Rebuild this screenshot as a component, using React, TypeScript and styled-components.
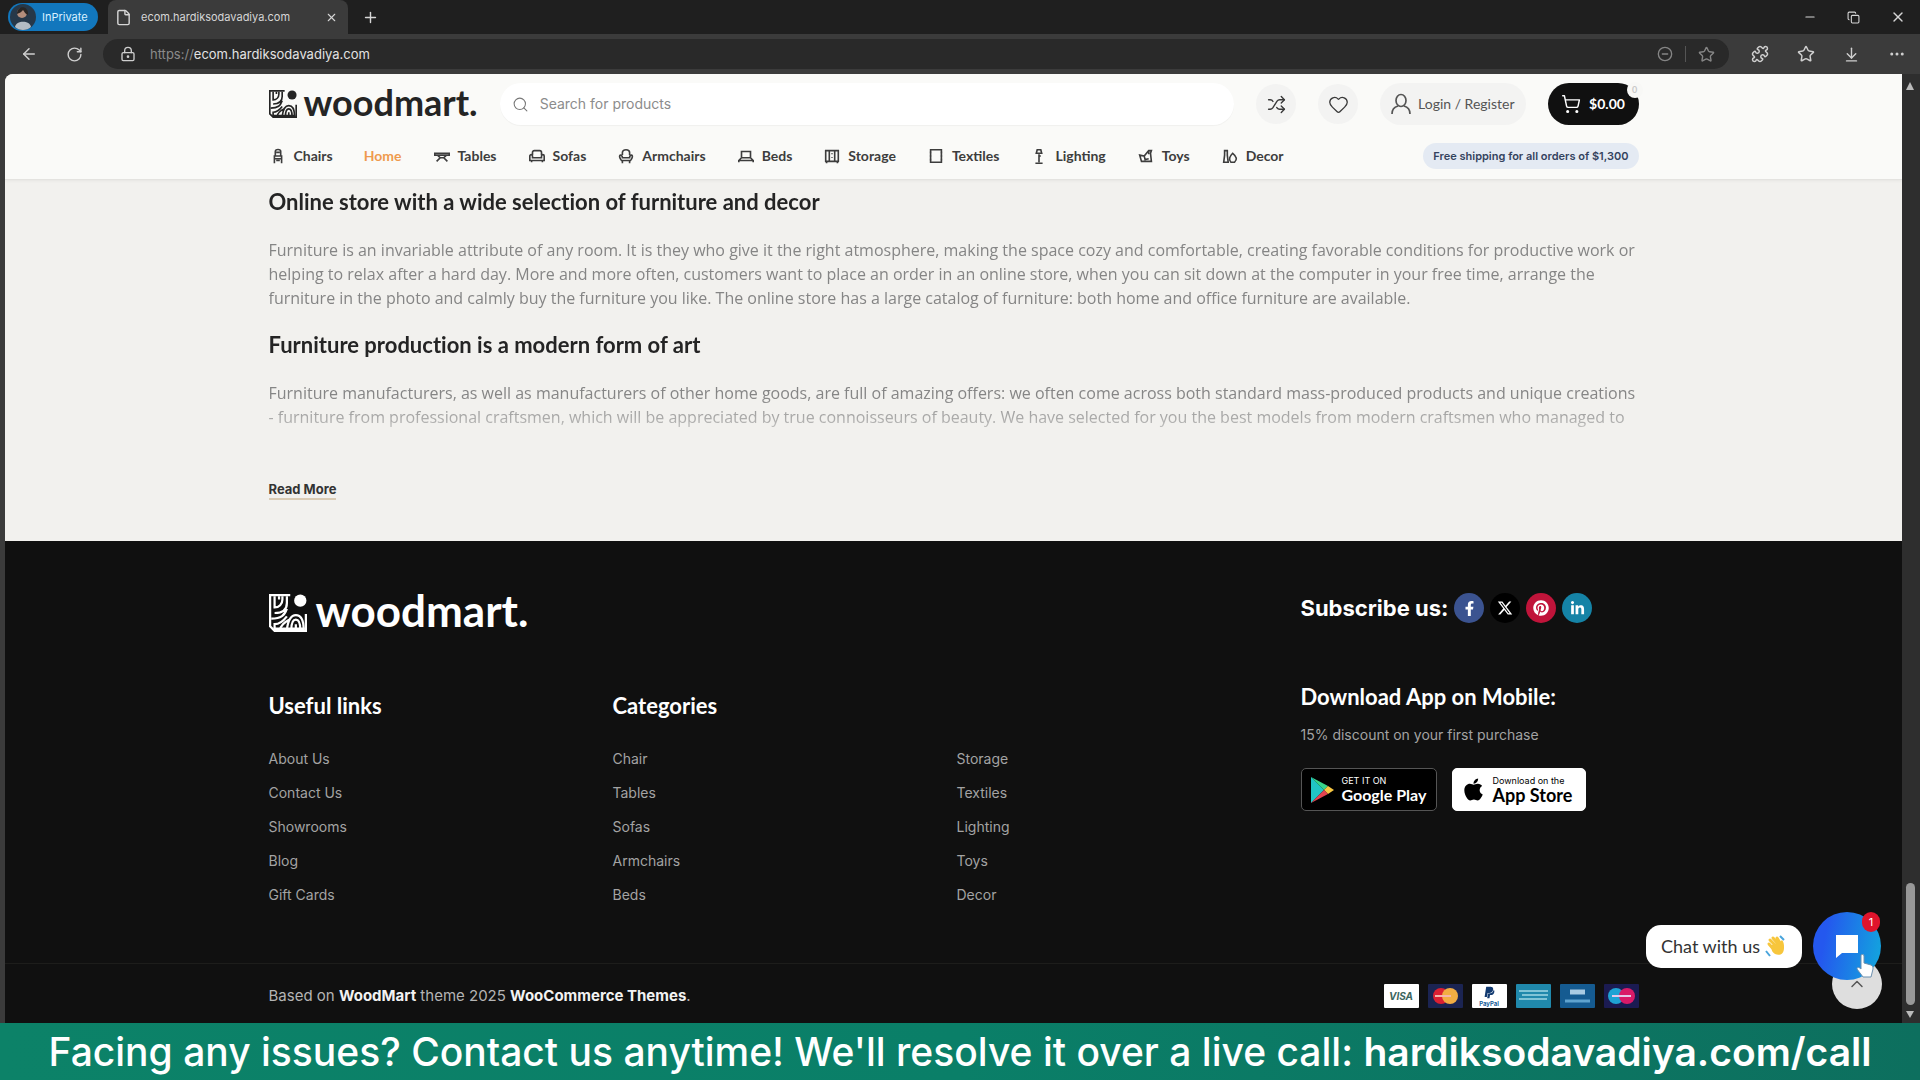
import React from "react";
import styled, { createGlobalStyle } from "styled-components";
import {
  ArrowLeft, RotateCw, File, X, Plus, Minus, Copy, LockKeyhole, CircleMinus, Star, Puzzle, ArrowDownToLine,
  Ellipsis, Search, Shuffle, Heart, ShoppingCart, ChevronUp,
} from "lucide-react";
import { FaFacebookF, FaPinterest, FaLinkedinIn, FaApple, FaPaypal } from "react-icons/fa";
import { FaXTwitter } from "react-icons/fa6";

const body = `Inter, "Liberation Sans", sans-serif`;
const reading = `"Open Sans", "Liberation Sans", sans-serif`;
const display = `Lato, "Liberation Sans", sans-serif`;

const GlobalStyle = createGlobalStyle`
  * { box-sizing: border-box; }
  body { margin: 0; background: #101010; font-family: ${body}; }
  h2, h3, p, ul { margin: 0; padding: 0; }
  ul { list-style: none; }
  a { color: inherit; text-decoration: none; }
  button { border: 0; padding: 0; background: none; color: inherit; font: inherit; cursor: pointer; }
  svg { display: block; flex: none; }
`;

const Screen = styled.div`
  display: flex;
  flex-direction: column;
  height: 100vh;
  overflow: hidden;
`;

/* Browser chrome */
const TabStrip = styled.div`
  display: flex;
  align-items: center;
  flex: none;
  height: 34px;
  padding: 0 14px 0 8px;
  background: #1f1f1f;
  color: #d6d6d6;
`;
const Profile = styled.button`
  display: flex;
  align-items: center;
  gap: 6px;
  width: 90px;
  height: 28px;
  padding: 0 2px;
  border-radius: 14px;
  background: #1277bd;
  color: #d9f0ff;
  font-size: 11px;
`;
const Tab = styled.div`
  display: flex;
  align-items: center;
  gap: 9px;
  align-self: stretch;
  width: 240px;
  margin: 0 14px 0 10px;
  padding: 0 10px 0 7px;
  border-radius: 8px 8px 0 0;
  background: #3b3b3b;
  font-size: 11px;
`;
const TabTitle = styled.span`
  flex: 1;
  white-space: nowrap;
`;
const WindowControls = styled.div`
  display: flex;
  gap: 30px;
  margin-left: auto;
`;
const Toolbar = styled.div`
  display: flex;
  align-items: center;
  flex: none;
  gap: 28px;
  height: 40px;
  padding: 0 14px 0 20px;
  background: #3b3b3b;
  color: #cfcfcf;
`;
const AddressBar = styled.div`
  display: flex;
  align-items: center;
  flex: 1;
  gap: 14px;
  height: 30px;
  margin: 0 -6px 0 -8px;
  padding: 0 14px 0 17px;
  border-radius: 15px;
  background: #292929;
`;
const Url = styled.span`
  flex: 1;
  color: #e2e2e2;
  font-size: 13px;
`;
const Scheme = styled.span`
  color: #8b8b8b;
`;
const Dim = styled.span`
  display: flex;
  gap: 12px;
  color: #858585;
`;
const Bar = styled.span`
  width: 1px;
  height: 16px;
  background: #555;
`;

/* Page viewport */
const Frame = styled.div`
  display: flex;
  flex: 1;
  min-height: 0;
  padding-left: 5px;
  background: #3b3b3b;
`;
const Page = styled.main`
  display: flex;
  flex-direction: column;
  flex: 1;
  overflow: hidden;
  border-radius: 8px 0 0 0;
  background: #f2f1ee;
`;
const Scrollbar = styled.div`
  display: flex;
  flex-direction: column;
  align-items: center;
  justify-content: space-between;
  width: 18px;
  padding: 7px 2px 4px 0;
  background: #2e2e2e;
`;
const Thumb = styled.div`
  width: 9px;
  height: 122px;
  margin: auto 0 5px;
  border-radius: 5px;
  background: #989898;
`;
const Container = styled.div`
  width: 100%;
  max-width: 1400px;
  margin: 0 auto;
  padding: 0 15px;
`;
const Header = styled.header`
  flex: none;
  border-bottom: 1px solid #e4e3e0;
  background: #fafaf8;
  box-shadow: 0 1px 3px rgba(0, 0, 0, 0.05);
`;
const HeaderTop = styled.div`
  display: flex;
  align-items: center;
  gap: 22px;
  height: 60px;
`;
const LogoLink = styled.a<{ $large?: boolean }>`
  display: flex;
  align-items: center;
  gap: ${(p) => (p.$large ? 9 : 7)}px;
  color: ${(p) => (p.$large ? "#fff" : "#242424")};
  font: 700 ${(p) => (p.$large ? 44 : 36)}px/44px ${display};
`;
const LogoText = styled.span`
  padding-bottom: 5px;
`;
const SearchBox = styled.label`
  display: flex;
  align-items: center;
  flex: 1;
  gap: 9px;
  height: 42px;
  padding: 0 12px;
  border-radius: 21px;
  background: #fff;
  color: #777;
  box-shadow: 0 1px 1px rgba(0, 0, 0, 0.04);
`;
const SearchInput = styled.input`
  flex: 1;
  border: 0;
  outline: 0;
  background: none;
  font: 400 14px/20px ${body};
  &::placeholder { color: #8c8c8c; opacity: 1; }
`;
const RoundButton = styled.button`
  display: grid;
  place-items: center;
  width: 40px;
  height: 40px;
  border-radius: 50%;
  background: #f3f3f2;
  color: #3a3a3a;
`;
const Login = styled.a`
  display: flex;
  align-items: center;
  gap: 7px;
  height: 42px;
  padding: 0 11px;
  border-radius: 21px;
  background: #f3f3f2;
  color: #555;
  font: 400 14px/20px ${display};
  white-space: nowrap;
`;
const Cart = styled.button`
  position: relative;
  display: flex;
  align-items: center;
  justify-content: center;
  gap: 8px;
  width: 91px;
  height: 42px;
  border-radius: 21px;
  background: #101010;
  color: #fff;
  font: 700 14px/20px ${display};
`;
const CartCount = styled.span`
  position: absolute;
  top: -1px;
  right: -4px;
  width: 16px;
  height: 16px;
  border-radius: 50%;
  background: #f8f8f6;
  color: #c9c9c9;
  font-size: 9px;
  line-height: 16px;
`;
const Nav = styled.nav`
  display: flex;
  align-items: center;
  gap: 31px;
  height: 45px;
  padding-bottom: 2px;
`;
const NavLink = styled.a<{ $active?: boolean }>`
  display: flex;
  align-items: center;
  gap: 7px;
  color: ${(p) => (p.$active ? "#ef9a4e" : "#3d3d3d")};
  font: 700 14px/20px ${display};
`;
const Shipping = styled.span`
  margin-left: auto;
  padding: 0 10px;
  border-radius: 13px;
  background: #e4eaf3;
  color: #34435e;
  font: 600 11px/26px ${body};
  white-space: nowrap;
`;

/* Article */
const Article = styled.section`
  flex: none;
  padding: 9px 0 41px;
`;
const Heading = styled.h3<{ $light?: boolean }>`
  color: ${(p) => (p.$light ? "#fff" : "#242424")};
  font: 700 22px/26px ${display};
  font-variant-ligatures: none;
`;
const Fade = styled.div`
  height: 280px;
  overflow: hidden;
  mask-image: linear-gradient(#000 206px, rgba(0, 0, 0, 0.6) 232px, transparent 258px);
`;
const Paragraph = styled.p`
  padding: 23px 0 22px;
  color: #858585;
  font: 400 16px/24px ${reading};
`;
const ReadMore = styled.button`
  display: block;
  margin-top: 11px;
  border-bottom: 2px solid #d9cbb4;
  color: #333;
  font: 700 13px/18px ${body};
`;

/* Footer */
const Footer = styled.footer`
  display: flex;
  flex-direction: column;
  flex: 1;
  background: #101010;
  color: #fff;
`;
const FooterGrid = styled.div`
  display: grid;
  grid-template-columns: repeat(4, 1fr);
  column-gap: 6px;
`;
const Brand = styled.div`
  grid-column: span 3;
  padding-top: 47px;
  height: 138px;
`;
const Social = styled.div`
  display: flex;
  align-items: center;
  gap: 6px;
  height: 30px;
  margin-top: 52px;
  font: 700 22px/24px ${body};
`;
const SocialLink = styled.a<{ $color: string }>`
  display: grid;
  place-items: center;
  width: 30px;
  height: 30px;
  border-radius: 50%;
  background: ${(p) => p.$color};
  color: #fff;
`;
const Column = styled.div`
  padding-top: 14px;
`;
const LinkList = styled.ul<{ $bare?: boolean }>`
  padding-top: ${(p) => (p.$bare ? 49 : 23)}px;
  color: #a3a3a3;
  font: 400 14px/34px ${body};
`;
const AppColumn = styled.div`
  padding-top: 5px;
`;
const Note = styled.p`
  padding: 13px 0 21px;
  color: #a3a3a3;
  font: 400 14px/24px ${body};
`;
const Stores = styled.div`
  display: flex;
  gap: 15px;
`;
const Store = styled.a<{ $light?: boolean }>`
  display: flex;
  align-items: center;
  gap: 7px;
  width: ${(p) => (p.$light ? 134 : 136)}px;
  height: 43px;
  padding: 0 8px;
  border: 1px solid ${(p) => (p.$light ? "#fff" : "#555")};
  border-radius: 5px;
  background: ${(p) => (p.$light ? "#fff" : "#000")};
  color: ${(p) => (p.$light ? "#000" : "#fff")};
  font: 700 ${(p) => (p.$light ? 18 : 16)}px/18px ${display};
  white-space: nowrap;
`;
const StoreHint = styled.small`
  display: block;
  font: 400 9px/11px ${body};
`;
const Bottom = styled.div`
  margin-top: auto;
  border-top: 1px solid #1d1d1b;
`;
const BottomRow = styled.div`
  display: flex;
  align-items: center;
  justify-content: space-between;
  height: 59px;
  padding-top: 5px;
  color: #b4b4b4;
  font: 400 15px/24px ${body};
  b { color: #f2f2f2; font-weight: 700; }
`;
const Cards = styled.div`
  display: flex;
  gap: 9px;
`;

/* Floating widgets */
const ChatDock = styled.aside`
  position: fixed;
  right: 39px;
  bottom: 100px;
  display: flex;
  align-items: center;
  gap: 11px;
`;
const ChatBubble = styled.div`
  display: flex;
  align-items: center;
  gap: 5px;
  height: 43px;
  padding: 0 15px;
  border-radius: 15px;
  background: #fff;
  color: #333;
  font: 400 18px/24px ${display};
  white-space: nowrap;
`;
const ChatButton = styled.button`
  position: relative;
  display: grid;
  place-items: center;
  width: 68px;
  height: 68px;
  border-radius: 50%;
  background: linear-gradient(100deg, #2458ee 20%, #149fdf 90%);
`;
const Unread = styled.span`
  position: absolute;
  top: 0;
  right: 1px;
  width: 18px;
  height: 20px;
  border-radius: 9px;
  background: #e0142c;
  color: #fff;
  font-size: 11px;
  line-height: 20px;
`;
const ToTop = styled.button`
  position: fixed;
  right: 38px;
  bottom: 71px;
  display: grid;
  place-items: center;
  width: 50px;
  height: 50px;
  border-radius: 50%;
  background: #dedede;
  color: #555;
`;
const Pointer = styled.svg`
  position: fixed;
  right: 46px;
  bottom: 102px;
`;
const Banner = styled.p`
  flex: none;
  height: 57px;
  background: linear-gradient(90deg, #0c8268, #0a7f68 50%, #0d6f5e);
  color: #fff;
  font: 500 39px/57px ${body};
  text-align: center;
  white-space: nowrap;
  b { font-weight: 600; }
`;

const LogoMark = ({ size }: { size: number }) => (
  <svg width={size} height={size} viewBox="1 1 34 34" fill="none" stroke="currentColor" strokeWidth="2">
    <path d="M20 2H2v28l4 4h28V19" />
    <circle cx="29" cy="7" r="5.500" fill="currentColor" stroke="none" />
    <path d="M6 3v10c4 0 7-3 7-7V3M10 3v3M17 3v6c0 6-4 9-11 9M3 23c9 0 12-3 14-9M6 33V28c5 0 8-3 11-7M11 33c0-3 4-7 8-9M17 33c1-8 3-13 8-13s7 4 7 13M21 33c0-6 1-9 4-9s4 3 4 9M25 28v5" />
    <path d="M5 31h28v3H6z" fill="currentColor" stroke="none" />
  </svg>
);

const navIcons: Record<string, React.ReactNode> = {
  Chairs: <path d="M6 9V4c0-3 6-3 6 0v5M5 9h8v3H5zM5 12v5M13 12v5M7 5h4M7 14h4" />,
  Tables: <path d="M1 6h16v2H1zM4 8l3 3-4 4M14 8l-3 3 4 4M7 11h4" />,
  Sofas: <path d="M4 8V5c0-1 1-2 2-2h6c1 0 2 1 2 2v3M1 9c0-2 3-2 3 0v2h10V9c0-2 3-2 3 0v5H1zM3 14v2M15 14v2" />,
  Armchairs: <path d="M5 8V5c0-4 8-4 8 0v3M3 8c2 0 2 3 2 3h8s0-3 2-3 1 4-1 6H4C2 12 1 8 3 8zM5 14v3M13 14v3" />,
  Beds: <path d="M4 11V4h10v7M1 16v-2l3-3h10l3 3v2M1 14h16" />,
  Storage: <path d="M2 3h14v12H2zM6 3v12M12 3v12M9 6v1M9 10v1M3 15v2M15 15v2" />,
  Textiles: <path d="M3 2h12v14H3zM2 5h2M2 9h2M2 13h2M14 5h2M14 9h2M14 13h2" />,
  Lighting: <path d="M9 7v9M5 17h8M6 6l1-4h4l1 4zM9 9h2" />,
  Toys: <path d="M2 8l5 1 5-6h3l-1 3 1 9H4zM7 9l1 4 4-1M5 15v1M13 15v1M12 3v4" />,
  Decor: <path d="M3 3h3v5l1 8H2l1-8zM12 6c5 4 5 7 2 10h-4c-3-3-1-7 2-10z" />,
};

const navItems = ["Chairs", "Home", "Tables", "Sofas", "Armchairs", "Beds", "Storage", "Textiles", "Lighting", "Toys", "Decor"];

const NavIcon = ({ name }: { name: string }) =>
  navIcons[name] ? (
    <svg width="18" height="18" viewBox="-1 -1 20 20" fill="none" stroke="currentColor" strokeWidth="1.800">{navIcons[name]}</svg>
  ) : null;

const PayCard = ({ kind }: { kind: string }) => (
  <svg width="35" height="24" viewBox="0 0 35 24" role="img" aria-label={kind}>
    <rect width="35" height="24" rx="1" fill={{ visa: "#fff", mastercard: "#1b2452", paypal: "#fff", amex: "#2089ac", visaElectron: "#155b91" }[kind] ?? "#1b1b52"} />
    {kind === "visa" && <text x="17" y="16" textAnchor="middle" fontFamily="Inter" fontWeight="700" fontStyle="italic" fontSize="10" fill="#3c6660">VISA</text>}
    {kind === "mastercard" && (<><circle cx="13" cy="12" r="8" fill="#db2032" /><circle cx="22" cy="12" r="8" fill="#f2ad43" /><path d="M7 12h16" stroke="#f6b5ab" strokeWidth="2" /></>)}
    {kind === "paypal" && (<><FaPaypal x="11" y="2" size={13} color="#123a70" /><text x="17" y="22" textAnchor="middle" fontFamily="Inter" fontWeight="700" fontSize="6" fill="#18609a">PayPal</text></>)}
    {kind === "amex" && (<path d="M3 7h29M6 11h26M3 15h28" stroke="#7fc4d6" strokeWidth="2" />)}
    {kind === "visaElectron" && (<><path d="M10 8h15" stroke="#a9cbe3" strokeWidth="5" /><path d="M5 17h25" stroke="#5fa3cf" strokeWidth="3" /></>)}
    {kind === "maestro" && (<><circle cx="12" cy="12" r="8" fill="#1fa3d4" /><circle cx="23" cy="12" r="8" fill="#d91a68" /><path d="M8 12h19" stroke="#e5c8ea" strokeWidth="2" /></>)}
  </svg>
);

export default function App() {
  return (
    <Screen>
      <GlobalStyle />
      <TabStrip>
        <Profile>
          <svg width="26" height="26" viewBox="0 0 26 26"><circle cx="13" cy="13" r="13" fill="#263849" /><path d="M5 23c1-7 15-7 16 0-4 4-12 4-16 0" fill="#b4bcc4" /><circle cx="12" cy="9" r="5" fill="#b28d7c" /><path d="M7 10c0-9 12-9 11 1-3-1-4-4-5-5-1 2-4 3-6 4" fill="#292625" /></svg>
          InPrivate
        </Profile>
        <Tab>
          <File size={17} strokeWidth={2} />
          <TabTitle>ecom.hardiksodavadiya.com</TabTitle>
          <button aria-label="Close tab"><X size={13} /></button>
        </Tab>
        <button aria-label="New tab"><Plus size={17} /></button>
        <WindowControls>
          <button aria-label="Minimize"><Minus size={14} /></button>
          <button aria-label="Restore"><Copy size={13} /></button>
          <button aria-label="Close"><X size={16} /></button>
        </WindowControls>
      </TabStrip>
      <Toolbar>
        <button aria-label="Back"><ArrowLeft size={18} /></button>
        <button aria-label="Reload"><RotateCw size={17} /></button>
        <AddressBar>
          <LockKeyhole size={16} />
          <Url><Scheme>https://</Scheme>ecom.hardiksodavadiya.com</Url>
          <Dim><CircleMinus size={16} /><Bar /><Star size={17} /></Dim>
        </AddressBar>
        <button aria-label="Extensions"><Puzzle size={18} /></button>
        <button aria-label="Favorites"><Star size={18} /></button>
        <button aria-label="Downloads"><ArrowDownToLine size={17} /></button>
        <button aria-label="Menu"><Ellipsis size={18} /></button>
      </Toolbar>

      <Frame>
        <Page>
          <Header>
            <Container>
              <HeaderTop>
                <LogoLink href="#"><LogoMark size={28} /><LogoText>woodmart.</LogoText></LogoLink>
                <SearchBox>
                  <Search size={17} strokeWidth={1.5} />
                  <SearchInput type="search" placeholder="Search for products" aria-label="Search for products" />
                </SearchBox>
                <RoundButton aria-label="Compare"><Shuffle size={19} strokeWidth={1.75} /></RoundButton>
                <RoundButton aria-label="Wishlist"><Heart size={21} strokeWidth={1.5} /></RoundButton>
                <Login href="#">
                  <svg width="20" height="22" viewBox="0 0 20 22" fill="none" stroke="currentColor" strokeWidth="1.700"><ellipse cx="10" cy="7.500" rx="5" ry="6" /><path d="M1 21c0-5 2-7 6-8M19 21c0-5-2-7-6-8" /></svg>
                  Login / Register
                </Login>
                <Cart><ShoppingCart size={20} strokeWidth={1.75} />$0.00<CartCount>0</CartCount></Cart>
              </HeaderTop>
              <Nav>
                {navItems.map((name) => (
                  <NavLink key={name} href="#" $active={name === "Home"}><NavIcon name={name} />{name}</NavLink>
                ))}
                <Shipping>Free shipping for all orders of $1,300</Shipping>
              </Nav>
            </Container>
          </Header>

          <Article>
            <Container>
              <Fade>
                <Heading>Online store with a wide selection of furniture and decor</Heading>
                <Paragraph>
                  Furniture is an invariable attribute of any room. It is they who give it the right atmosphere, making the space cozy and comfortable, creating favorable conditions for productive work or<br />
                  helping to relax after a hard day. More and more often, customers want to place an order in an online store, when you can sit down at the computer in your free time, arrange the<br />
                  furniture in the photo and calmly buy the furniture you like. The online store has a large catalog of furniture: both home and office furniture are available.
                </Paragraph>
                <Heading>Furniture production is a modern form of art</Heading>
                <Paragraph>
                  Furniture manufacturers, as well as manufacturers of other home goods, are full of amazing offers: we often come across both standard mass-produced products and unique creations<br />
                  - furniture from professional craftsmen, which will be appreciated by true connoisseurs of beauty. We have selected for you the best models from modern craftsmen who managed to
                </Paragraph>
              </Fade>
              <ReadMore>Read More</ReadMore>
            </Container>
          </Article>

          <Footer>
            <Container>
              <FooterGrid>
                <Brand><LogoLink href="#" $large><LogoMark size={38} /><LogoText>woodmart.</LogoText></LogoLink></Brand>
                <Social>
                  Subscribe us:
                  <SocialLink $color="#3b5390" href="#" aria-label="Facebook"><FaFacebookF size={15} /></SocialLink>
                  <SocialLink $color="#000" href="#" aria-label="X"><FaXTwitter size={16} /></SocialLink>
                  <SocialLink $color="#c0143a" href="#" aria-label="Pinterest"><FaPinterest size={16} /></SocialLink>
                  <SocialLink $color="#1583a6" href="#" aria-label="LinkedIn"><FaLinkedinIn size={15} /></SocialLink>
                </Social>
                <Column>
                  <Heading $light>Useful links</Heading>
                  <LinkList>
                    {["About Us", "Contact Us", "Showrooms", "Blog", "Gift Cards"].map((t) => <li key={t}><a href="#">{t}</a></li>)}
                  </LinkList>
                </Column>
                <Column>
                  <Heading $light>Categories</Heading>
                  <LinkList>
                    {["Chair", "Tables", "Sofas", "Armchairs", "Beds"].map((t) => <li key={t}><a href="#">{t}</a></li>)}
                  </LinkList>
                </Column>
                <Column>
                  <LinkList $bare>
                    {["Storage", "Textiles", "Lighting", "Toys", "Decor"].map((t) => <li key={t}><a href="#">{t}</a></li>)}
                  </LinkList>
                </Column>
                <AppColumn>
                  <Heading $light>Download App on Mobile:</Heading>
                  <Note>15% discount on your first purchase</Note>
                  <Stores>
                    <Store href="#">
                      <svg width="25" height="28" viewBox="0 0 25 28"><path d="M1 1v26l13-13z" fill="#20c5c5" /><path d="M1 1l17 9-4 4z" fill="#38d58b" /><path d="M18 10l6 4-6 4-4-4z" fill="#f8c742" /><path d="M1 27l17-9-4-4z" fill="#e34350" /></svg>
                      <span><StoreHint>GET IT ON</StoreHint>Google Play</span>
                    </Store>
                    <Store href="#" $light>
                      <FaApple size={25} />
                      <span><StoreHint>Download on the</StoreHint>App Store</span>
                    </Store>
                  </Stores>
                </AppColumn>
              </FooterGrid>
            </Container>
            <Bottom>
              <Container>
                <BottomRow>
                  <span>Based on <b>WoodMart</b> theme 2025 <b>WooCommerce Themes</b>.</span>
                  <Cards>
                    {["visa", "mastercard", "paypal", "amex", "visaElectron", "maestro"].map((k) => <PayCard key={k} kind={k} />)}
                  </Cards>
                </BottomRow>
              </Container>
            </Bottom>
          </Footer>
        </Page>
        <Scrollbar>
          <svg width="10" height="10" viewBox="0 0 10 10"><path d="M5 1l4 8H1z" fill="#bbb" /></svg>
          <Thumb />
          <svg width="10" height="9" viewBox="0 0 10 9"><path d="M5 8L1 1h8z" fill="#bbb" /></svg>
        </Scrollbar>
      </Frame>

      <ToTop aria-label="Back to top"><ChevronUp size={20} strokeWidth={1.75} /></ToTop>
      <ChatDock>
        <ChatBubble>
          Chat with us
          <svg width="22" height="24" viewBox="0 0 22 24"><path d="M5 6l6 6M8 4l6 7M12 4l5 8M4 10l6 7" stroke="#f7c63c" strokeWidth="3" strokeLinecap="round" /><path d="M6 11l8-2 3-3c2 2 2 5 2 8 0 8-8 9-12 3z" fill="#f7c63c" /><path d="M15 2l4 4M1 17l4 5" stroke="#4aa5dc" strokeWidth="2" /></svg>
        </ChatBubble>
        <ChatButton aria-label="Open chat">
          <svg width="26" height="26" viewBox="0 0 26 26"><path d="M2 2h22v18H8l-6 5z" fill="#fff" /></svg>
          <Unread>1</Unread>
        </ChatButton>
      </ChatDock>
      <Pointer width="18" height="24" viewBox="0 0 18 24"><path d="M5 1c1-1 3-1 3 1v7l7 2c2 1 2 2 2 4l-2 8H7L1 15c0-2 2-2 4 0z" fill="#fff" stroke="#6b8fae" /></Pointer>
      <Banner>Facing any issues? Contact us anytime! We'll resolve it over a live call: <b>hardiksodavadiya.com/call</b></Banner>
    </Screen>
  );
}
